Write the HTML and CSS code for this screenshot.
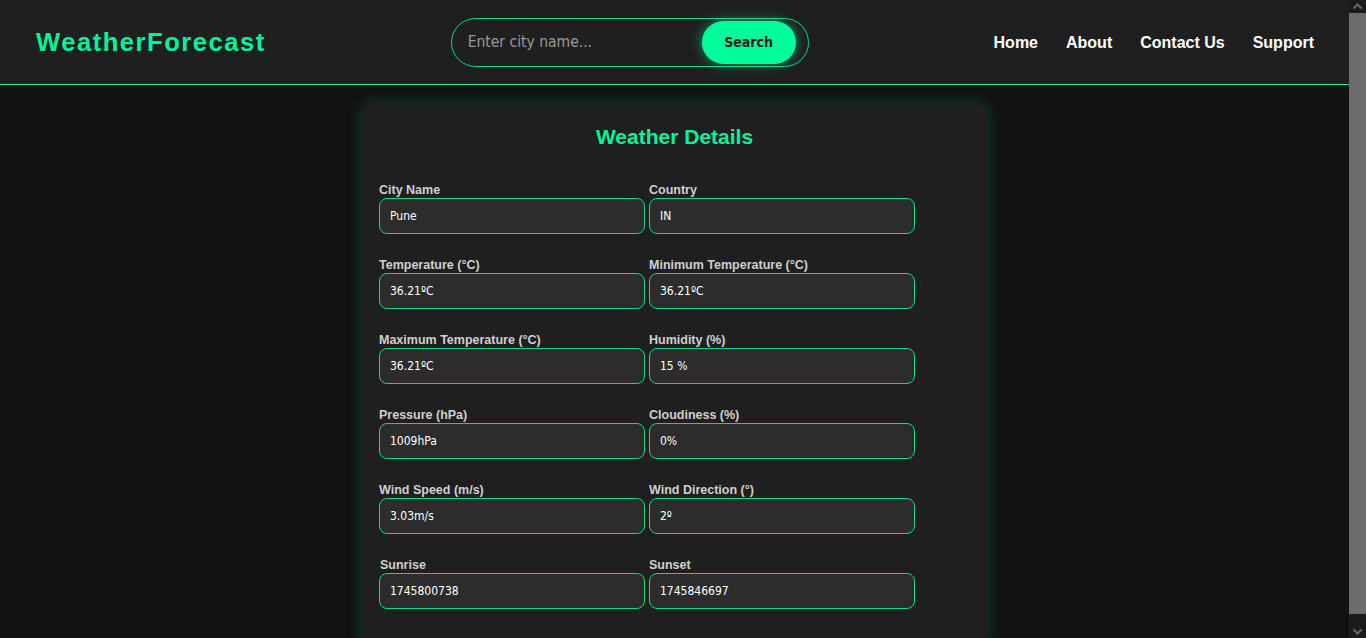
FILE: index.html
```html
<!DOCTYPE html>
<html lang="en">
<head>
<meta charset="UTF-8">
<title>WeatherForecast</title>
<link rel="stylesheet" href="styles.css">
</head>
<body>
<div class="page">
<header class="topbar">
  <div class="logo">WeatherForecast</div>
  <form class="search" onsubmit="return false;">
    <input class="search-input" type="text" placeholder="Enter city name...">
    <button class="search-btn" type="submit">Search</button>
  </form>
  <nav class="nav">
    <a href="#">Home</a>
    <a href="#">About</a>
    <a href="#">Contact Us</a>
    <a href="#">Support</a>
  </nav>
</header>
<main class="main">
  <section class="card">
    <h2 class="card-title">Weather Details</h2>
    <div class="grid">
      <div class="field"><label>City Name</label><input class="value" type="text" value="Pune" readonly></div>
      <div class="field"><label>Country</label><input class="value" type="text" value="IN" readonly></div>
      <div class="field"><label>Temperature (°C)</label><input class="value" type="text" value="36.21ºC" readonly></div>
      <div class="field"><label>Minimum Temperature (°C)</label><input class="value" type="text" value="36.21ºC" readonly></div>
      <div class="field"><label>Maximum Temperature (°C)</label><input class="value" type="text" value="36.21ºC" readonly></div>
      <div class="field"><label>Humidity (%)</label><input class="value" type="text" value="15 %" readonly></div>
      <div class="field"><label>Pressure (hPa)</label><input class="value" type="text" value="1009hPa" readonly></div>
      <div class="field"><label>Cloudiness (%)</label><input class="value" type="text" value="0%" readonly></div>
      <div class="field"><label>Wind Speed (m/s)</label><input class="value" type="text" value="3.03m/s" readonly></div>
      <div class="field"><label>Wind Direction (°)</label><input class="value" type="text" value="2º" readonly></div>
      <div class="field"><label class="shift">Sunrise</label><input class="value" type="text" value="1745800738" readonly></div>
      <div class="field"><label>Sunset</label><input class="value" type="text" value="1745846697" readonly></div>
    </div>
  </section>
</main>
</div>
<div class="scrollbar" aria-hidden="true">
  <div class="sb-btn">
    <svg width="17" height="13" viewBox="0 0 17 13"><polyline points="4.5,8.5 8.5,4.5 12.5,8.5" fill="none" stroke="#6a6a6a" stroke-width="2"/></svg>
  </div>
  <div class="sb-track"><div class="sb-thumb"></div></div>
  <div class="sb-btn">
    <svg width="17" height="13" viewBox="0 0 17 13"><polyline points="4.5,4.5 8.5,8.5 12.5,4.5" fill="none" stroke="#6a6a6a" stroke-width="2"/></svg>
  </div>
</div>
</body>
</html>
```

FILE: styles.css
```css
:root {
  color-scheme: dark;
}
* {
  box-sizing: border-box;
}
html,
body {
  height: 100%;
  overflow: hidden;
}
body {
  margin: 0;
  background: #121212;
  color: #fff;
  font-family: "Liberation Sans", Arial, sans-serif;
  display: flex;
}
.page {
  flex: 1;
  min-width: 0;
  height: 100vh;
  overflow: hidden;
}
.scrollbar {
  width: 17px;
  height: 100vh;
  background: #1b1b1b;
  display: flex;
  flex-direction: column;
}
.sb-btn {
  height: 13px;
  flex: none;
  display: block;
}
.sb-btn svg {
  display: block;
}
.sb-track {
  flex: 1;
  display: flex;
  flex-direction: column;
  padding-bottom: 11px;
}
.sb-thumb {
  flex: 1;
  background: #6c6c6c;
}
.topbar {
  height: 85px;
  background: #1f1f1f;
  border-bottom: 1px solid #00ff99;
  display: flex;
  align-items: center;
  justify-content: space-between;
  padding: 0 35px 0 36px;
}
.logo {
  color: #00f59a;
  font-weight: bold;
  font-size: 25.6px;
  letter-spacing: 1.5px;
}
.search {
  width: 358px;
  height: 49px;
  border: 1px solid #00e08c;
  border-radius: 25px;
  display: flex;
  align-items: center;
  padding: 0 12px 0 0;
  background: #1f1f1f;
}
.search-input {
  flex: 1;
  min-width: 0;
  height: 100%;
  background: transparent;
  border: none;
  outline: none;
  padding: 0 0 0 16px;
  color: #fff;
  font-family: "DejaVu Sans Condensed", "DejaVu Sans", sans-serif;
  font-stretch: condensed;
  font-size: 15.5px;
}
.search-input::placeholder {
  color: #9a9a9a;
}
.search-btn {
  width: 94px;
  height: 43px;
  border: none;
  border-radius: 22px;
  background: #00ff9c;
  color: #1a1a1a;
  font-family: "DejaVu Sans Condensed", "DejaVu Sans", sans-serif;
  font-stretch: condensed;
  font-weight: bold;
  font-size: 14px;
  box-shadow: 0 0 12px rgba(0, 255, 156, 0.55);
  cursor: pointer;
}
.nav {
  display: flex;
  gap: 28px;
  padding-top: 2px;
}
.nav a {
  color: #fff;
  text-decoration: none;
  font-weight: bold;
  font-size: 16px;
}
.main {
  display: flex;
  justify-content: center;
  padding: 19px 0 20px;
}
.card {
  width: 625px;
  background: #1f1f1f;
  border-radius: 10px;
  padding: 21px 17px 40px;
  box-shadow: 0 0 16px rgba(0, 255, 150, 0.22);
}
.card-title {
  margin: 0 0 32px;
  text-align: center;
  color: #00f59a;
  font-size: 21px;
  line-height: 24px;
  font-weight: bold;
}
.grid {
  display: grid;
  grid-template-columns: 266px 266px;
  column-gap: 4px;
  row-gap: 22px;
}
.field {
  display: flex;
  flex-direction: column;
}
.field label {
  color: #cfcfcf;
  font-weight: bold;
  font-size: 12.5px;
  line-height: 15px;
  padding-top: 2px;
}
.field label.shift {
  padding-left: 1px;
}
.value {
  height: 36px;
  border: 1px solid #00e08c;
  border-radius: 8px;
  background: #2c2c2c;
  color: #fff;
  padding: 0 10px;
  font-family: "DejaVu Sans Condensed", "DejaVu Sans", sans-serif;
  font-stretch: condensed;
  font-size: 12px;
  outline: none;
}
```
